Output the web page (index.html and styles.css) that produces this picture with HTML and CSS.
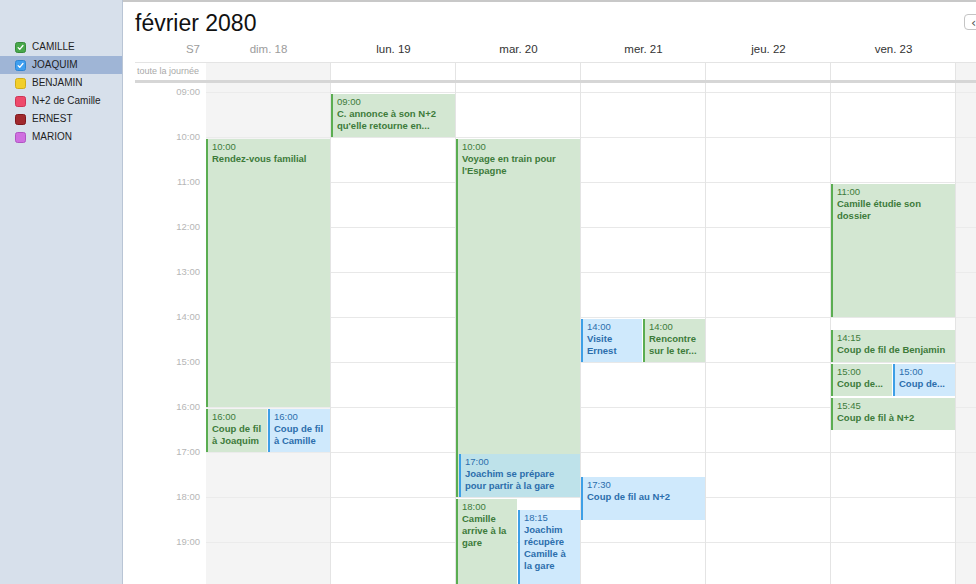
FILE: index.html
```html
<!DOCTYPE html>
<html lang="fr">
<head>
<meta charset="utf-8">
<title>Calendrier — février 2080</title>
<link rel="stylesheet" href="styles.css">
</head>
<body>
<div class="app">
  <aside class="sidebar">
    <ul class="cal-list">
      <li class="cal-item"><span class="box box-green"><svg viewBox="0 0 11 11" class="check"><path d="M2.6 5.7 L4.6 7.8 L8.5 3.1"/></svg></span>CAMILLE</li>
      <li class="cal-item is-selected"><span class="box box-blue"><svg viewBox="0 0 11 11" class="check"><path d="M2.6 5.7 L4.6 7.8 L8.5 3.1"/></svg></span>JOAQUIM</li>
      <li class="cal-item"><span class="box box-yellow"></span>BENJAMIN</li>
      <li class="cal-item"><span class="box box-pink"></span>N+2 de Camille</li>
      <li class="cal-item"><span class="box box-red"></span>ERNEST</li>
      <li class="cal-item"><span class="box box-purple"></span>MARION</li>
    </ul>
  </aside>
  <main class="main">
    <header class="topbar">
      <h1 class="title">février 2080</h1>
      <button class="nav-btn" type="button">‹</button>
    </header>
    <div class="week">
      <div class="row head-row">
        <div class="gutter week-no">S7</div>
        <div class="day-head is-weekend">dim. 18</div>
        <div class="day-head">lun. 19</div>
        <div class="day-head">mar. 20</div>
        <div class="day-head">mer. 21</div>
        <div class="day-head">jeu. 22</div>
        <div class="day-head">ven. 23</div>
        <div class="day-head is-weekend"></div>
      </div>
      <div class="row allday-row">
        <div class="gutter allday-label">toute la journée</div>
        <div class="cell weekend"></div>
        <div class="cell"></div>
        <div class="cell"></div>
        <div class="cell"></div>
        <div class="cell"></div>
        <div class="cell"></div>
        <div class="cell weekend"></div>
      </div>
      <div class="allday-sep"></div>
      <div class="row body-row">
        <div class="gutter hours">
          <div class="hour">09:00</div>
          <div class="hour">10:00</div>
          <div class="hour">11:00</div>
          <div class="hour">12:00</div>
          <div class="hour">13:00</div>
          <div class="hour">14:00</div>
          <div class="hour">15:00</div>
          <div class="hour">16:00</div>
          <div class="hour">17:00</div>
          <div class="hour">18:00</div>
          <div class="hour">19:00</div>
        </div>
        <div class="cell day weekend">
          <div class="ev ev-green full" style="top:56px;height:268px"><div class="ev-time">10:00</div><div class="ev-title">Rendez-vous familial</div></div>
          <div class="ev ev-green half-l" style="top:326px;height:43px"><div class="ev-time">16:00</div><div class="ev-title">Coup de fil<br>à Joaquim</div></div>
          <div class="ev ev-blue half-r" style="top:326px;height:43px"><div class="ev-time">16:00</div><div class="ev-title">Coup de fil<br>à Camille</div></div>
        </div>
        <div class="cell day">
          <div class="ev ev-green full" style="top:11px;height:43px"><div class="ev-time">09:00</div><div class="ev-title">C. annonce à son N+2<br>qu'elle retourne en...</div></div>
        </div>
        <div class="cell day">
          <div class="ev ev-green full" style="top:56px;height:358px"><div class="ev-time">10:00</div><div class="ev-title">Voyage en train pour<br>l'Espagne</div></div>
          <div class="ev ev-overlay inset" style="top:371px;height:43px"><div class="ev-time">17:00</div><div class="ev-title">Joachim se prépare<br>pour partir à la gare</div></div>
          <div class="ev ev-green half-l" style="top:416px;height:120px"><div class="ev-time">18:00</div><div class="ev-title">Camille<br>arrive à la<br>gare</div></div>
          <div class="ev ev-blue half-r" style="top:427.25px;height:120px"><div class="ev-time">18:15</div><div class="ev-title">Joachim<br>récupère<br>Camille à<br>la gare</div></div>
        </div>
        <div class="cell day">
          <div class="ev ev-blue half-l" style="top:236px;height:43px"><div class="ev-time">14:00</div><div class="ev-title">Visite<br>Ernest</div></div>
          <div class="ev ev-green half-r" style="top:236px;height:43px"><div class="ev-time">14:00</div><div class="ev-title">Rencontre<br>sur le ter...</div></div>
          <div class="ev ev-blue full" style="top:393.5px;height:43px"><div class="ev-time">17:30</div><div class="ev-title">Coup de fil au N+2</div></div>
        </div>
        <div class="cell day"></div>
        <div class="cell day">
          <div class="ev ev-green full" style="top:101px;height:133px"><div class="ev-time">11:00</div><div class="ev-title">Camille étudie son<br>dossier</div></div>
          <div class="ev ev-green full" style="top:247.25px;height:31.75px"><div class="ev-time">14:15</div><div class="ev-title">Coup de fil de Benjamin</div></div>
          <div class="ev ev-green half-l" style="top:281px;height:31.75px"><div class="ev-time">15:00</div><div class="ev-title">Coup de...</div></div>
          <div class="ev ev-blue half-r" style="top:281px;height:31.75px"><div class="ev-time">15:00</div><div class="ev-title">Coup de...</div></div>
          <div class="ev ev-green full" style="top:314.75px;height:31.75px"><div class="ev-time">15:45</div><div class="ev-title">Coup de fil à N+2</div></div>
        </div>
        <div class="cell day weekend"></div>
      </div>
    </div>
  </main>
</div>
</body>
</html>
```

FILE: styles.css
```css
html, body {
  margin: 0;
  padding: 0;
}

body {
  width: 976px;
  height: 584px;
  overflow: hidden;
  background: #ffffff;
  font-family: "Liberation Sans", Arial, sans-serif;
  color: #222222;
}

.app {
  display: flex;
  width: 976px;
  height: 584px;
  overflow: hidden;
}

/* ---------- Sidebar ---------- */
.sidebar {
  width: 122px;
  flex: 0 0 122px;
  background: #d7e0eb;
  border-right: 1px solid #b9c5d5;
}

.cal-list {
  list-style: none;
  margin: 0;
  padding: 38px 0 0 0;
}

.cal-item {
  display: flex;
  align-items: center;
  gap: 6px;
  height: 18px;
  padding-left: 15px;
  font-size: 10px;
  line-height: 18px;
  color: #1e1e1e;
}

.cal-item.is-selected {
  background: #9fb5d6;
}

.box {
  box-sizing: border-box;
  width: 11px;
  height: 11px;
  border-radius: 2.5px;
  border: 1px solid;
  display: flex;
}

.check {
  width: 9px;
  height: 9px;
}

.check path {
  fill: none;
  stroke: #ffffff;
  stroke-width: 1.6;
  stroke-linecap: round;
  stroke-linejoin: round;
}

.box-green { background: #48a84b; border-color: #378a3a; }
.box-blue { background: #3f9ff0; border-color: #2d85d2; }
.box-yellow { background: #f2cf2b; border-color: #d0ad1a; }
.box-pink { background: #ee4a6b; border-color: #cd3455; }
.box-red { background: #a0282d; border-color: #7f181c; }
.box-purple { background: #cf6fe0; border-color: #b054c3; }

/* ---------- Main ---------- */
.main {
  flex: 1 1 auto;
  min-width: 0;
  overflow: hidden;
  border-top: 2px solid #c8c8c8;
  padding-left: 12px;
}

.topbar {
  display: flex;
  align-items: flex-start;
  height: 35px;
}

.title {
  margin: 0;
  padding-top: 8px;
  font-size: 23px;
  line-height: 27px;
  font-weight: normal;
  color: #111111;
}

.nav-btn {
  margin: 12px -12px 0 auto;
  box-sizing: border-box;
  width: 24px;
  height: 16px;
  padding: 0 0 0 6px;
  border: 1px solid #c4c4c4;
  border-radius: 4px;
  background: #ffffff;
  font-family: "DejaVu Sans", sans-serif;
  font-size: 13px;
  line-height: 13px;
  color: #555555;
  text-align: left;
}

.week {
  width: 946px;
}

.row {
  display: grid;
  grid-template-columns: 71px repeat(7, 125px);
}

.gutter {
  box-sizing: border-box;
}

/* header row */
.head-row {
  box-sizing: border-box;
  height: 26px;
  border-bottom: 1px solid #e4e4e4;
}

.week-no,
.day-head {
  font-size: 11.5px;
  line-height: 25px;
  color: #333333;
}

.week-no {
  text-align: right;
  padding-right: 6px;
  color: #9c9c9c;
}

.day-head {
  text-align: center;
}

.day-head.is-weekend {
  color: #9c9c9c;
}

/* all-day row */
.allday-row {
  height: 17px;
}

.allday-label {
  padding-left: 2px;
  font-size: 9px;
  line-height: 17px;
  color: #a9a9a9;
  white-space: nowrap;
}

.cell {
  box-sizing: border-box;
  border-right: 1px solid #e4e4e4;
}

.weekend {
  background-color: #f4f4f4;
}

.allday-sep {
  height: 3px;
  background: #d6d6d6;
}

/* timed body */
.body-row {
  height: 520px;
}

.hours {
  padding-top: 3px;
  padding-right: 6px;
}

.hour {
  height: 45px;
  font-size: 9.5px;
  line-height: 12px;
  text-align: right;
  color: #b6b6b6;
}

.day {
  position: relative;
  background-image: linear-gradient(to bottom, #e8e8e8 0, #e8e8e8 1px, transparent 1px);
  background-size: 100% 45px;
  background-position: 0 9px;
  background-repeat: repeat-y;
}

.day.weekend {
  background-image: linear-gradient(to bottom, #ebebeb 0, #ebebeb 1px, transparent 1px);
}

/* events */
.ev {
  position: absolute;
  box-sizing: border-box;
  padding: 2px 2px 0 4px;
  border-left: 2px solid;
  overflow: hidden;
  white-space: nowrap;
  font-size: 9.5px;
  line-height: 12px;
}

.ev-time {
  font-weight: normal;
}

.ev-title {
  font-weight: bold;
}

.ev-green {
  background: #d3e7d2;
  border-color: #5aad51;
  color: #3d7b3a;
}

.ev-blue {
  background: #cfe9fc;
  border-color: #3d9fe6;
  color: #2c6eac;
}

.ev-overlay {
  background: #bee2ea;
  border-color: #3d9fe6;
  color: #2c6eac;
}

.full { left: 0; right: 0; }
.half-l { left: 0; width: 61px; }
.half-r { left: 62px; right: 0; }
.inset { left: 3px; right: 0; }
```
